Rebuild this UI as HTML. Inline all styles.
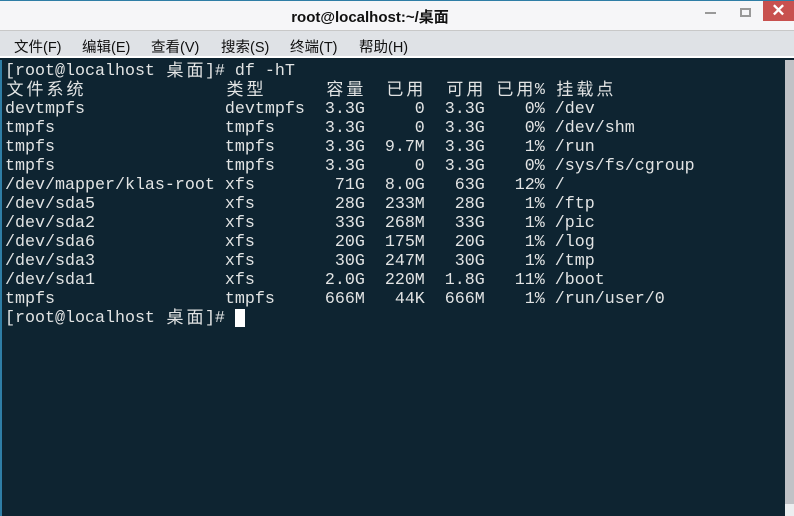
<!DOCTYPE html>
<html><head><meta charset="utf-8"><style>
*{margin:0;padding:0;box-sizing:border-box}
body{width:794px;height:516px;overflow:hidden;background:#0e2431;position:relative;font-family:"Liberation Sans","Noto Sans CJK SC",sans-serif}
#tb{position:absolute;left:0;top:0;width:794px;height:31px;background:#f6f6f8;border-top:1px solid #2f7ea6;border-bottom:1px solid #c8c8c8}
#title{position:absolute;left:0;width:740px;top:5px;text-align:center;font-weight:bold;font-size:15px;color:#111}
#min{position:absolute;left:705px;top:11px;width:11px;height:2px;background:#999}
#max{position:absolute;left:740px;top:7px;width:11px;height:9px;border:2px solid #999}
#cls{position:absolute;left:763px;top:0;width:31px;height:20px;background:#c8514f;color:#fff;text-align:center;font-size:17px;line-height:20px;font-weight:bold}
#mb{position:absolute;left:0;top:31px;width:794px;height:27px;background:#dfe2e6;border-bottom:2px solid #fff}
#mb span{position:absolute;top:5px;font-size:14.5px;color:#111}
#term{position:absolute;left:0;top:60px;width:785px;height:456px;background:#0e2431;border-left:2px solid #2f7ea6}
#sb{position:absolute;left:785px;top:60px;width:9px;height:456px;background:#c0c2c6}
#sb i{position:absolute;left:0;bottom:0;width:9px;height:12px;background:#eceef0}
pre{position:absolute;left:5px;top:62px;font-family:"Liberation Mono",monospace;font-size:16.67px;line-height:19px;color:#e2e4e4;white-space:pre}
.c{display:inline-block;width:20px;height:19px;text-align:center;font-family:"Noto Sans CJK SC",sans-serif;font-size:17px;line-height:17px;vertical-align:top;position:relative;top:-2px}
.cur{display:inline-block;width:10px;height:18px;background:#fff;vertical-align:top}
</style></head><body>
<div id="tb"><div id="title">root@localhost:~/桌面</div><div id="min"></div><div id="max"></div><div id="cls">✕</div></div>
<div id="mb"><span style="left:14px">文件(F)</span><span style="left:82px">编辑(E)</span><span style="left:151px">查看(V)</span><span style="left:221px">搜索(S)</span><span style="left:290px">终端(T)</span><span style="left:359px">帮助(H)</span></div>
<div id="term"></div>
<div id="sb"><i></i></div>
<pre>[root@localhost <span class="c">桌</span><span class="c">面</span>]# df -hT
<span class="c">文</span><span class="c">件</span><span class="c">系</span><span class="c">统</span>              <span class="c">类</span><span class="c">型</span>      <span class="c">容</span><span class="c">量</span>  <span class="c">已</span><span class="c">用</span>  <span class="c">可</span><span class="c">用</span> <span class="c">已</span><span class="c">用</span>% <span class="c">挂</span><span class="c">载</span><span class="c">点</span>
devtmpfs              devtmpfs  3.3G     0  3.3G    0% /dev
tmpfs                 tmpfs     3.3G     0  3.3G    0% /dev/shm
tmpfs                 tmpfs     3.3G  9.7M  3.3G    1% /run
tmpfs                 tmpfs     3.3G     0  3.3G    0% /sys/fs/cgroup
/dev/mapper/klas-root xfs        71G  8.0G   63G   12% /
/dev/sda5             xfs        28G  233M   28G    1% /ftp
/dev/sda2             xfs        33G  268M   33G    1% /pic
/dev/sda6             xfs        20G  175M   20G    1% /log
/dev/sda3             xfs        30G  247M   30G    1% /tmp
/dev/sda1             xfs       2.0G  220M  1.8G   11% /boot
tmpfs                 tmpfs     666M   44K  666M    1% /run/user/0
[root@localhost <span class="c">桌</span><span class="c">面</span>]# <span class="cur"></span></pre>
</body></html>
